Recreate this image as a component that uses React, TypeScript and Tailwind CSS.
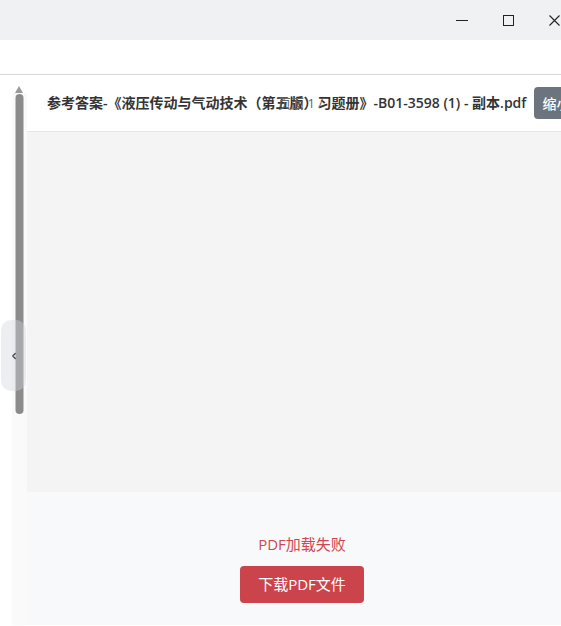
import { ChevronLeft } from 'lucide-react';

const FILE_NAME = '参考答案-《液压传动与气动技术（第五版）习题册》-B01-3598 (1) - 副本.pdf';

function WindowControls() {
    return (
        <div className="flex h-[40px] w-[577px] items-center bg-[#f0f1f3] pl-[439px]">
            <button className="flex h-[40px] w-[46px] items-center justify-center">
                <span className="block h-px w-[12px] bg-[#222]" />
            </button>
            <button className="flex h-[40px] w-[46px] items-center justify-center">
                <span className="block h-[11px] w-[11px] border border-[#222]" />
            </button>
            <button className="flex h-[40px] w-[46px] items-center justify-center">
                <svg width="11" height="11" viewBox="0 0 11 11" stroke="#222" strokeWidth="1.1">
                    <path d="M0.5 0.5 L10.5 10.5 M10.5 0.5 L0.5 10.5" />
                </svg>
            </button>
        </div>
    );
}

function Scrollbar() {
    return (
        <div className="flex h-full w-[27px] shrink-0">
            <div className="w-[12px] bg-white" />
            <div className="relative flex w-[15px] flex-col items-center bg-[#fafafa]">
                <div className="flex h-[18px] w-full items-end justify-center bg-white pr-[1px]">
                    <svg width="8" height="7" viewBox="0 0 8 7">
                        <path d="M4 0 L8 7 L0 7 Z" fill="#9a9a9a" />
                    </svg>
                </div>
                <div className="mt-[1px] h-[320px] w-[8px] -translate-x-[0.5px] rounded-full bg-[#8b8b8b]" />
            </div>
        </div>
    );
}

export default function App() {
    return (
        <div
            className="h-[626px] w-[561px] overflow-hidden bg-white"
            style={{ fontFamily: '"Open Sans", "Noto Sans CJK SC", sans-serif' }}
        >
            <WindowControls />
            <div className="h-[35px] border-b border-[#d3d7db] bg-white" />

            <div className="relative flex h-[550px]">
                <Scrollbar />

                {/* viewer */}
                <div className="flex w-[550px] shrink-0 flex-col">
                    <div className="flex h-[57px] items-center border-b border-[#e4e6e9] bg-white pl-[20px]">
                        <div className="relative flex items-center">
                            <span className="whitespace-nowrap text-[14px] font-semibold leading-[20px] text-[#333]">{FILE_NAME}</span>
                            {/* page indicator sits on top of the file name */}
                            <span className="absolute left-[231px] top-[2px] whitespace-nowrap text-[13px] leading-[16px] text-[#666]">页面 1 /</span>
                        </div>
                        <button className="ml-[8px] h-[32px] shrink-0 rounded-[4px] bg-[#6c757d] px-[8px] text-[14px] font-medium text-white">
                            缩小
                        </button>
                    </div>

                    <div className="h-[360px] bg-[#f4f4f5]" />

                    <div className="flex flex-1 flex-col items-center bg-[#f8f9fa] pt-[40px]">
                        <p className="text-[15px] leading-[24px] text-[#d04650]">PDF加载失败</p>
                        <button className="mt-[10px] h-[37px] w-[124px] rounded-[4px] bg-[#cb444b] text-[15px] text-white">
                            下载PDF文件
                        </button>
                    </div>
                </div>

                {/* sidebar toggle */}
                <button className="absolute left-[1px] top-[245px] flex h-[71px] w-[25px] items-center justify-center rounded-[10px] bg-gray-300/40">
                    <ChevronLeft className="h-[10px] w-[10px] text-[#444]" strokeWidth={3} />
                </button>
            </div>
        </div>
    );
}
